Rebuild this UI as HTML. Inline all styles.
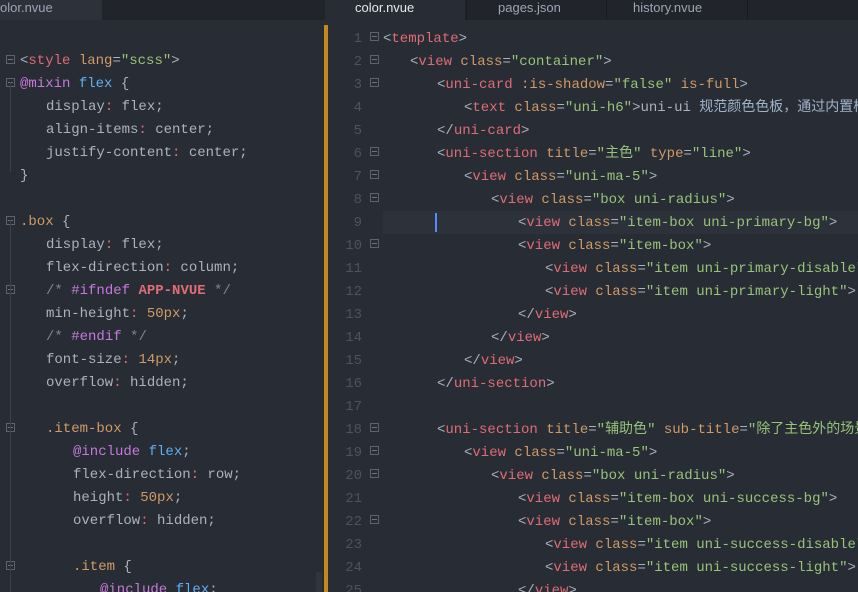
<!DOCTYPE html>
<html><head><meta charset="utf-8"><style>
*{margin:0;padding:0;box-sizing:border-box}
body{width:858px;height:592px;overflow:hidden;background:#282c34;font-family:"Liberation Mono","Noto Sans CJK SC",monospace;font-size:14px;color:#abb2bf;position:relative}
.tabbar{position:absolute;left:0;top:0;width:858px;height:20px;background:#21252b}
.tab{position:absolute;top:0;height:20px;font-family:"Liberation Sans",sans-serif;font-size:13px;line-height:16px;color:#9da5b4}
.pane{position:absolute;top:20px;bottom:0;overflow:hidden;background:#282c34}
.l{position:absolute;height:23px;line-height:23px;white-space:pre;margin-top:3px}
.f{position:absolute;width:9px;height:9px;border:1px solid #5c6370}
.f:after{content:"";position:absolute;left:1px;top:3px;width:5px;height:1px;background:#6b7280}
.n{position:absolute;width:30px;text-align:right;color:#4b5263;height:23px;line-height:23px;margin-top:3px}
.t{color:#e06c75}.a{color:#d19a66}.s{color:#98c379}.k{color:#c678dd}.b{color:#61afef}.c{color:#7f848e}.r{color:#e06c75;font-weight:bold}.p{color:#abb2bf}.o{color:#d19a66}
.cjk{font-family:"Noto Sans CJK SC",sans-serif;line-height:0}
</style></head><body>
<div class="tabbar">
<div class="tab" style="left:0;width:102px;background:#2c313a;padding-left:0">olor.nvue</div>
<div class="tab" style="left:325px;width:140px;background:#282c34;color:#e6e8ec;padding-left:30px">color.nvue</div>
<div class="tab" style="left:466px;width:140px;border-left:1px solid #181a1f;padding-left:31px">pages.json</div>
<div class="tab" style="left:606px;width:142px;border-left:1px solid #181a1f;border-right:1px solid #181a1f;padding-left:26px">history.nvue</div>
</div>
<div class="pane" style="left:0;width:324px" id="L">
<div class="f" style="left:6px;top:35px"></div><div class="l" style="left:20px;top:27px"><span class="p">&lt;</span><span class="t">style</span> <span class="a">lang</span>=<span class="s">"scss"</span>&gt;</div>
<div class="f" style="left:6px;top:58px"></div><div class="l" style="left:20px;top:50px"><span class="k">@mixin</span> <span class="b">flex</span> {</div>
<div class="l" style="left:46px;top:73px">display<span class="t">:</span> flex;</div>
<div class="l" style="left:46px;top:96px">align-items<span class="t">:</span> center;</div>
<div class="l" style="left:46px;top:119px">justify-content<span class="t">:</span> center;</div>
<div class="l" style="left:20px;top:142px">}</div>
<div class="f" style="left:6px;top:196px"></div><div class="l" style="left:20px;top:188px"><span class="o">.box</span> {</div>
<div class="l" style="left:46px;top:211px">display<span class="t">:</span> flex;</div>
<div class="l" style="left:46px;top:234px">flex-direction<span class="t">:</span> column;</div>
<div class="f" style="left:6px;top:265px"></div><div class="l" style="left:46px;top:257px"><span class="c">/* </span><span class="k">#ifndef</span> <span class="r">APP-NVUE</span><span class="c"> */</span></div>
<div class="l" style="left:46px;top:280px">min-height<span class="t">:</span> <span class="o">50px</span>;</div>
<div class="l" style="left:46px;top:303px"><span class="c">/* </span><span class="k">#endif</span><span class="c"> */</span></div>
<div class="l" style="left:46px;top:326px">font-size<span class="t">:</span> <span class="o">14px</span>;</div>
<div class="l" style="left:46px;top:349px">overflow<span class="t">:</span> hidden;</div>
<div class="f" style="left:6px;top:403px"></div><div class="l" style="left:46px;top:395px"><span class="o">.item-box</span> {</div>
<div class="l" style="left:73px;top:418px"><span class="k">@include</span> <span class="b">flex</span>;</div>
<div class="l" style="left:73px;top:441px">flex-direction<span class="t">:</span> row;</div>
<div class="l" style="left:73px;top:464px">height<span class="t">:</span> <span class="o">50px</span>;</div>
<div class="l" style="left:73px;top:487px">overflow<span class="t">:</span> hidden;</div>
<div class="f" style="left:6px;top:541px"></div><div class="l" style="left:73px;top:533px"><span class="o">.item</span> {</div>
<div class="l" style="left:100px;top:556px"><span class="k">@include</span> <span class="b">flex</span>;</div>
<div style="position:absolute;left:10px;top:62px;width:1px;height:90px;background:#3b4048"></div>
<div style="position:absolute;left:10px;top:200px;width:1px;height:420px;background:#3b4048"></div>
<div style="position:absolute;left:316px;top:552px;width:6px;height:40px;background:#2f343d"></div>
</div>
<div style="position:absolute;left:324px;top:25px;width:4px;height:567px;background:#c08a1e"></div>
<div class="pane" style="left:328px;right:0">
<div style="position:absolute;left:55px;top:191px;right:0;height:23px;background:#2c313a"></div>
<div style="position:absolute;left:107px;top:193px;width:2px;height:19px;background:#528bff"></div>
<div id="R"></div>
</div>
<script>
var lines=[
[0,'<span class="p">&lt;</span><span class="t">template</span>&gt;',1],
[1,'&lt;<span class="t">view</span> <span class="a">class</span>=<span class="s">"container"</span>&gt;',1],
[2,'&lt;<span class="t">uni-card</span> <span class="a">:is-shadow</span>=<span class="s">"false"</span> <span class="a">is-full</span>&gt;',1],
[3,'&lt;<span class="t">text</span> <span class="a">class</span>=<span class="s">"uni-h6"</span>&gt;uni-ui <span class="cjk" style="color:#9fb3c8">规范颜色色板，通过内置样式快速指定元素前景和背景色。</span>',0],
[2,'&lt;/<span class="t">uni-card</span>&gt;',0],
[2,'&lt;<span class="t">uni-section</span> <span class="a">title</span>=<span class="s">"<span class="cjk">主色</span>"</span> <span class="a">type</span>=<span class="s">"line"</span>&gt;',1],
[3,'&lt;<span class="t">view</span> <span class="a">class</span>=<span class="s">"uni-ma-5"</span>&gt;',1],
[4,'&lt;<span class="t">view</span> <span class="a">class</span>=<span class="s">"box uni-radius"</span>&gt;',1],
[5,'&lt;<span class="t">view</span> <span class="a">class</span>=<span class="s">"item-box uni-primary-bg"</span>&gt;',0],
[5,'&lt;<span class="t">view</span> <span class="a">class</span>=<span class="s">"item-box"</span>&gt;',1],
[6,'&lt;<span class="t">view</span> <span class="a">class</span>=<span class="s">"item uni-primary-disable"</span>&gt;',0],
[6,'&lt;<span class="t">view</span> <span class="a">class</span>=<span class="s">"item uni-primary-light"</span>&gt;',0],
[5,'&lt;/<span class="t">view</span>&gt;',0],
[4,'&lt;/<span class="t">view</span>&gt;',0],
[3,'&lt;/<span class="t">view</span>&gt;',0],
[2,'&lt;/<span class="t">uni-section</span>&gt;',0],
[0,'',0],
[2,'&lt;<span class="t">uni-section</span> <span class="a">title</span>=<span class="s">"<span class="cjk">辅助色</span>"</span> <span class="a">sub-title</span>=<span class="s">"<span class="cjk">除了主色外的场景色</span>"</span>&gt;',1],
[3,'&lt;<span class="t">view</span> <span class="a">class</span>=<span class="s">"uni-ma-5"</span>&gt;',1],
[4,'&lt;<span class="t">view</span> <span class="a">class</span>=<span class="s">"box uni-radius"</span>&gt;',1],
[5,'&lt;<span class="t">view</span> <span class="a">class</span>=<span class="s">"item-box uni-success-bg"</span>&gt;',0],
[5,'&lt;<span class="t">view</span> <span class="a">class</span>=<span class="s">"item-box"</span>&gt;',1],
[6,'&lt;<span class="t">view</span> <span class="a">class</span>=<span class="s">"item uni-success-disable"</span>&gt;',0],
[6,'&lt;<span class="t">view</span> <span class="a">class</span>=<span class="s">"item uni-success-light"</span>&gt;',0],
[5,'&lt;/<span class="t">view</span>&gt;',0]
];
var h='';
lines.forEach(function(x,i){var top=5+23*i;
h+='<div class="n" style="left:4px;top:'+top+'px">'+(i+1)+'</div>';
if(x[2])h+='<div class="f" style="left:42px;top:'+(top+7)+'px"></div>';
h+='<div class="l" style="left:'+(55+27*x[0])+'px;top:'+top+'px">'+x[1]+'</div>';});
document.getElementById('R').innerHTML=h;
</script>
</body></html>
